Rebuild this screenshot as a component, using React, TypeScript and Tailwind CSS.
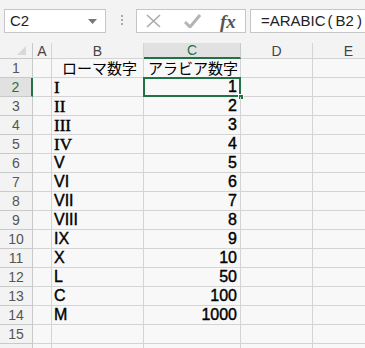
import React from "react";

const cols = [
  { key: "A", w: "w-[19px]" },
  { key: "B", w: "w-[92px]" },
  { key: "C", w: "w-[97px]" },
  { key: "D", w: "w-[72px]" },
  { key: "E", w: "w-[72px]" },
];

const rows: { b: string; c: string; serif?: boolean }[] = [
  { b: "ローマ数字", c: "アラビア数字" },
  { b: "I", c: "1", serif: true },
  { b: "II", c: "2", serif: true },
  { b: "III", c: "3", serif: true },
  { b: "IV", c: "4", serif: true },
  { b: "V", c: "5" },
  { b: "VI", c: "6" },
  { b: "VII", c: "7" },
  { b: "VIII", c: "8" },
  { b: "IX", c: "9" },
  { b: "X", c: "10" },
  { b: "L", c: "50" },
  { b: "C", c: "100" },
  { b: "M", c: "1000" },
  { b: "", c: "" },
  { b: "", c: "" },
];

const font = { fontFamily: '"Liberation Sans", "Noto Sans CJK JP", sans-serif' };

function FormulaBar() {
  return (
    <div className="flex h-[43px] items-start bg-[#f3f3f3] pt-[9px] pl-[4px]">
      <div className="flex h-[24px] w-[102px] items-center justify-between border border-[#c6c6c6] bg-white pl-[5px] pr-[8px] text-[15px] text-[#222]">
        <span>C2</span>
        <svg width="9" height="5" viewBox="0 0 9 5">
          <path d="M0 0h9L4.5 5z" fill="#777" />
        </svg>
      </div>
      <div className="ml-[15px] mt-[6px] flex flex-col gap-[2px]">
        <span className="h-[2px] w-[2px] bg-[#aaa]" />
        <span className="h-[2px] w-[2px] bg-[#aaa]" />
        <span className="h-[2px] w-[2px] bg-[#aaa]" />
      </div>
      <div className="ml-[13px] flex h-[24px] w-[110px] items-center border border-[#c6c6c6] bg-white">
        <svg className="ml-[9px]" width="15" height="14" viewBox="0 0 15 14">
          <path d="M1 1l13 12M14 1L1 13" stroke="#aaa" strokeWidth="1.6" fill="none" />
        </svg>
        <svg className="ml-[23px]" width="17" height="14" viewBox="0 0 17 14">
          <path d="M1 8l5 5L16 1" stroke="#b4b4b4" strokeWidth="3" fill="none" />
        </svg>
        <span
          className="ml-[19px] text-[19px] font-bold italic leading-none text-[#555]"
          style={{ fontFamily: '"Liberation Serif", serif' }}
        >
          fx
        </span>
      </div>
      <div className="ml-[4px] flex h-[24px] flex-1 items-center border border-r-0 border-[#c6c6c6] bg-white pl-[10px] text-[15px] text-[#222]">
        <span>=ARABIC</span>
        <span className="ml-[2px] mr-[3px]">(</span>
        <span>B2</span>
        <span className="ml-[3px]">)</span>
      </div>
    </div>
  );
}

function HeaderRow() {
  return (
    <div className="flex h-[16px] text-[14px] leading-none">
      <div className="relative w-[33px] shrink-0 border-r border-b border-[#c9c9c9] bg-[#f3f3f3]">
        <svg className="absolute right-[6px] bottom-[3px]" width="9" height="9" viewBox="0 0 9 9">
          <path d="M9 0v9H0z" fill="#d8d8d8" />
        </svg>
      </div>
      {cols.map((c) =>
        c.key === "C" ? (
          <div
            key={c.key}
            className={`${c.w} flex shrink-0 items-center justify-center border-r border-b-2 border-r-[#c9c9c9] border-b-[#217346] bg-[#e1e1e1] text-[#217346]`}
          >
            {c.key}
          </div>
        ) : (
          <div
            key={c.key}
            className={`${c.w} flex shrink-0 items-center justify-center border-r border-b border-[#d4d4d4] bg-[#f3f3f3] text-[#444]`}
          >
            {c.key}
          </div>
        )
      )}
    </div>
  );
}

export default function App() {
  return (
    <div className="h-[348px] w-[365px] overflow-hidden bg-[#f8f8f8]" style={font}>
      <FormulaBar />
      <HeaderRow />
      {rows.map((r, i) => {
        const n = i + 1;
        const sel = n === 2;
        return (
          <div key={n} className="flex h-[19px] text-[16px] leading-none text-black">
            <div
              className={
                sel
                  ? "flex w-[33px] shrink-0 items-center justify-center border-r-2 border-b border-r-[#217346] border-b-[#c9c9c9] bg-[#e1e1e1] text-[#217346]"
                  : "flex w-[33px] shrink-0 items-center justify-center border-r border-b border-[#c9c9c9] bg-[#f3f3f3] text-[#555]"
              }
            >
              {n <= 15 && <span className="text-[14px]">{n}</span>}
            </div>
            <div className="w-[19px] shrink-0 border-r border-b border-[#d4d4d4]" />
            <div
              className={`flex w-[92px] shrink-0 items-center border-r border-b border-[#d4d4d4] ${
                n === 1 ? "pl-[10px] text-[15px]" : "pl-[2px] [-webkit-text-stroke:0.4px_black]"
              } ${r.serif ? "text-[17px]" : ""}`}
              style={r.serif ? { fontFamily: '"Liberation Serif", serif' } : undefined}
            >
              {r.b}
            </div>
            <div
              className={`relative flex w-[97px] shrink-0 items-center border-r border-b border-[#d4d4d4] ${
                n === 1 ? "pl-[4px] text-[15px]" : "justify-end pr-[3px] [-webkit-text-stroke:0.4px_black]"
              }`}
            >
              {r.c}
              {sel && (
                <>
                  <div className="absolute -top-[1px] -left-[1px] h-[20px] w-[98px] border-2 border-[#217346]" />
                  <div className="absolute -right-[4px] -bottom-[4px] h-[6px] w-[6px] border border-white bg-[#217346]" />
                </>
              )}
            </div>
            <div className="w-[72px] shrink-0 border-r border-b border-[#d4d4d4]" />
            <div className="w-[72px] shrink-0 border-r border-b border-[#d4d4d4]" />
          </div>
        );
      })}
    </div>
  );
}
